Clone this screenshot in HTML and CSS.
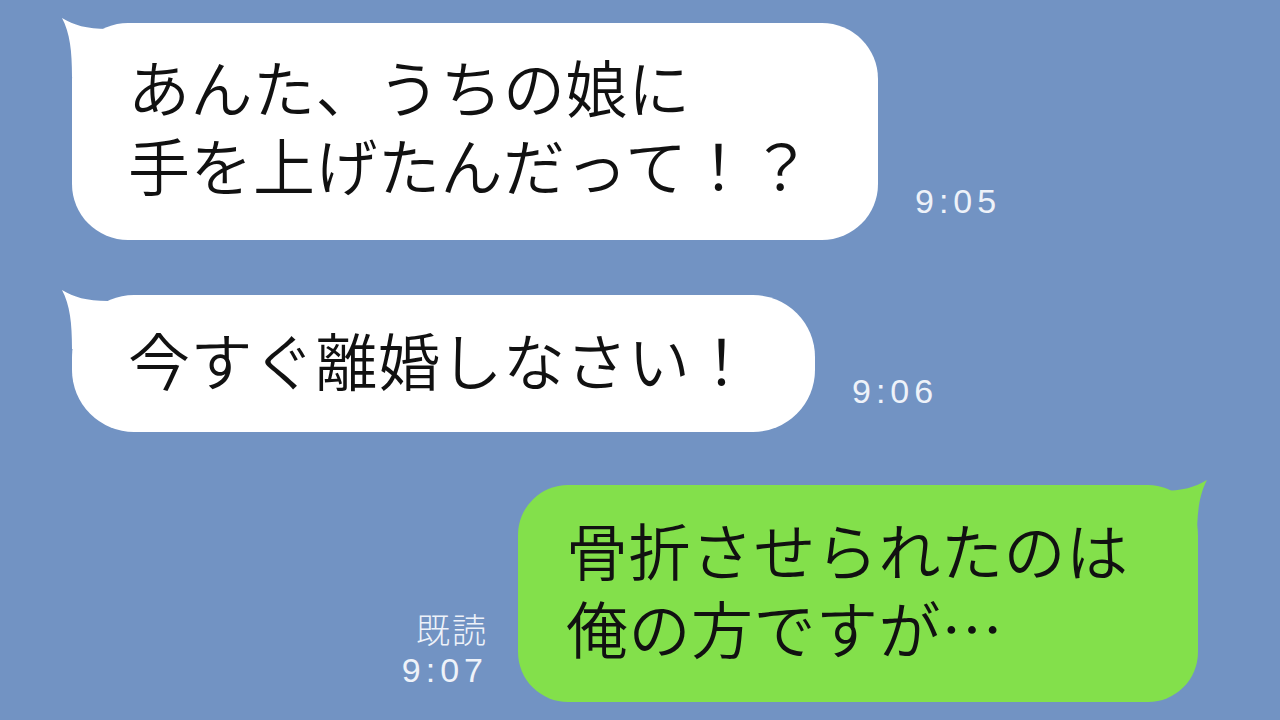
FILE: index.html
```html
<!DOCTYPE html>
<html lang="ja">
<head>
    <meta charset="UTF-8">
    <meta name="viewport" content="width=device-width, initial-scale=1.0">
    <title>トーク</title>
    <link rel="stylesheet" href="styles.css">
</head>
<body>
    <div class="chat">
        <div class="row row-left first">
            <div class="bubble bubble-white big">
                <svg class="tail tail-left" viewBox="0 0 60 60"><path d="M2 1 C 14 8, 26 12, 48 12 L 48 60 L 12 60 C 12 34, 10 16, 2 1 Z"/></svg>
                <p>あんた、うちの娘に<br>手を上げたんだって！？</p>
            </div>
            <div class="meta meta-left one">9:05</div>
        </div>

        <div class="row row-left second">
            <div class="bubble bubble-white small">
                <svg class="tail tail-left" viewBox="0 0 60 60"><path d="M2 1 C 14 8, 26 12, 48 12 L 48 60 L 12 60 C 12 34, 10 16, 2 1 Z"/></svg>
                <p>今すぐ離婚しなさい！</p>
            </div>
            <div class="meta meta-left two">9:06</div>
        </div>

        <div class="row row-right third">
            <div class="meta meta-right">
                <span class="read">既読</span>
                <span>9:07</span>
            </div>
            <div class="bubble bubble-green big">
                <svg class="tail tail-right" viewBox="0 0 60 60"><path d="M58 1 C 46 8, 34 12, 12 12 L 12 60 L 48 60 C 48 34, 50 16, 58 1 Z"/></svg>
                <p>骨折させられたのは<br>俺の方ですが…</p>
            </div>
        </div>
    </div>
</body>
</html>
```

FILE: styles.css
```css
/* Fundo da conversa */
body {
    margin: 0;
    padding: 0;
    width: 1280px;
    height: 720px;
    overflow: hidden;
    background-color: #7293c3;
    font-family: "Noto Sans CJK JP", "Noto Sans", sans-serif;
    color: #111;
}

.chat {
    display: flex;
    flex-direction: column;
    padding: 23px 82px 0 72px;
}

.row {
    display: flex;
    align-items: flex-end;
}

.row-right {
    justify-content: flex-end;
}

.second {
    margin-top: 55px;
}

.third {
    margin-top: 53px;
}

/* Balões */
.bubble {
    position: relative;
    box-sizing: border-box;
}

.bubble p {
    margin: 0;
    font-size: 62px;
    font-weight: 350;
    line-height: 78px;
    letter-spacing: 0.5px;
    white-space: nowrap;
}

.bubble-white {
    background-color: #ffffff;
    fill: #ffffff;
}

.bubble-green {
    background-color: #83e04b;
    fill: #83e04b;
}

.big {
    height: 217px;
    padding: 24px 0 0 56px;
    border-radius: 56px;
}

.first .bubble {
    width: 806px;
}

.second .bubble {
    width: 743px;
    height: 137px;
    padding: 25px 0 0 56px;
    border-radius: 62px;
}

.third .bubble {
    width: 680px;
    padding-left: 48px;
    padding-top: 25px;
    border-radius: 50px;
}

.tail {
    position: absolute;
    top: -6px;
    width: 60px;
    height: 60px;
}

.tail-left {
    left: -12px;
}

.tail-right {
    right: -11px;
}

/* Hora e leitura */
.meta {
    font-family: "Liberation Sans", sans-serif;
    color: #eef2f9;
    font-size: 34px;
    line-height: 38px;
    letter-spacing: 5px;
}

.meta-left {
    margin-left: 37px;
}

.one {
    margin-bottom: 20px;
}

.two {
    margin-bottom: 22px;
}

.meta-right {
    display: flex;
    flex-direction: column;
    align-items: flex-end;
    margin-right: 30px;
    margin-bottom: 13px;
}

.read {
    font-family: "Noto Sans CJK JP", sans-serif;
    font-weight: 300;
    font-size: 34px;
    line-height: 44px;
    letter-spacing: 2px;
}
```
